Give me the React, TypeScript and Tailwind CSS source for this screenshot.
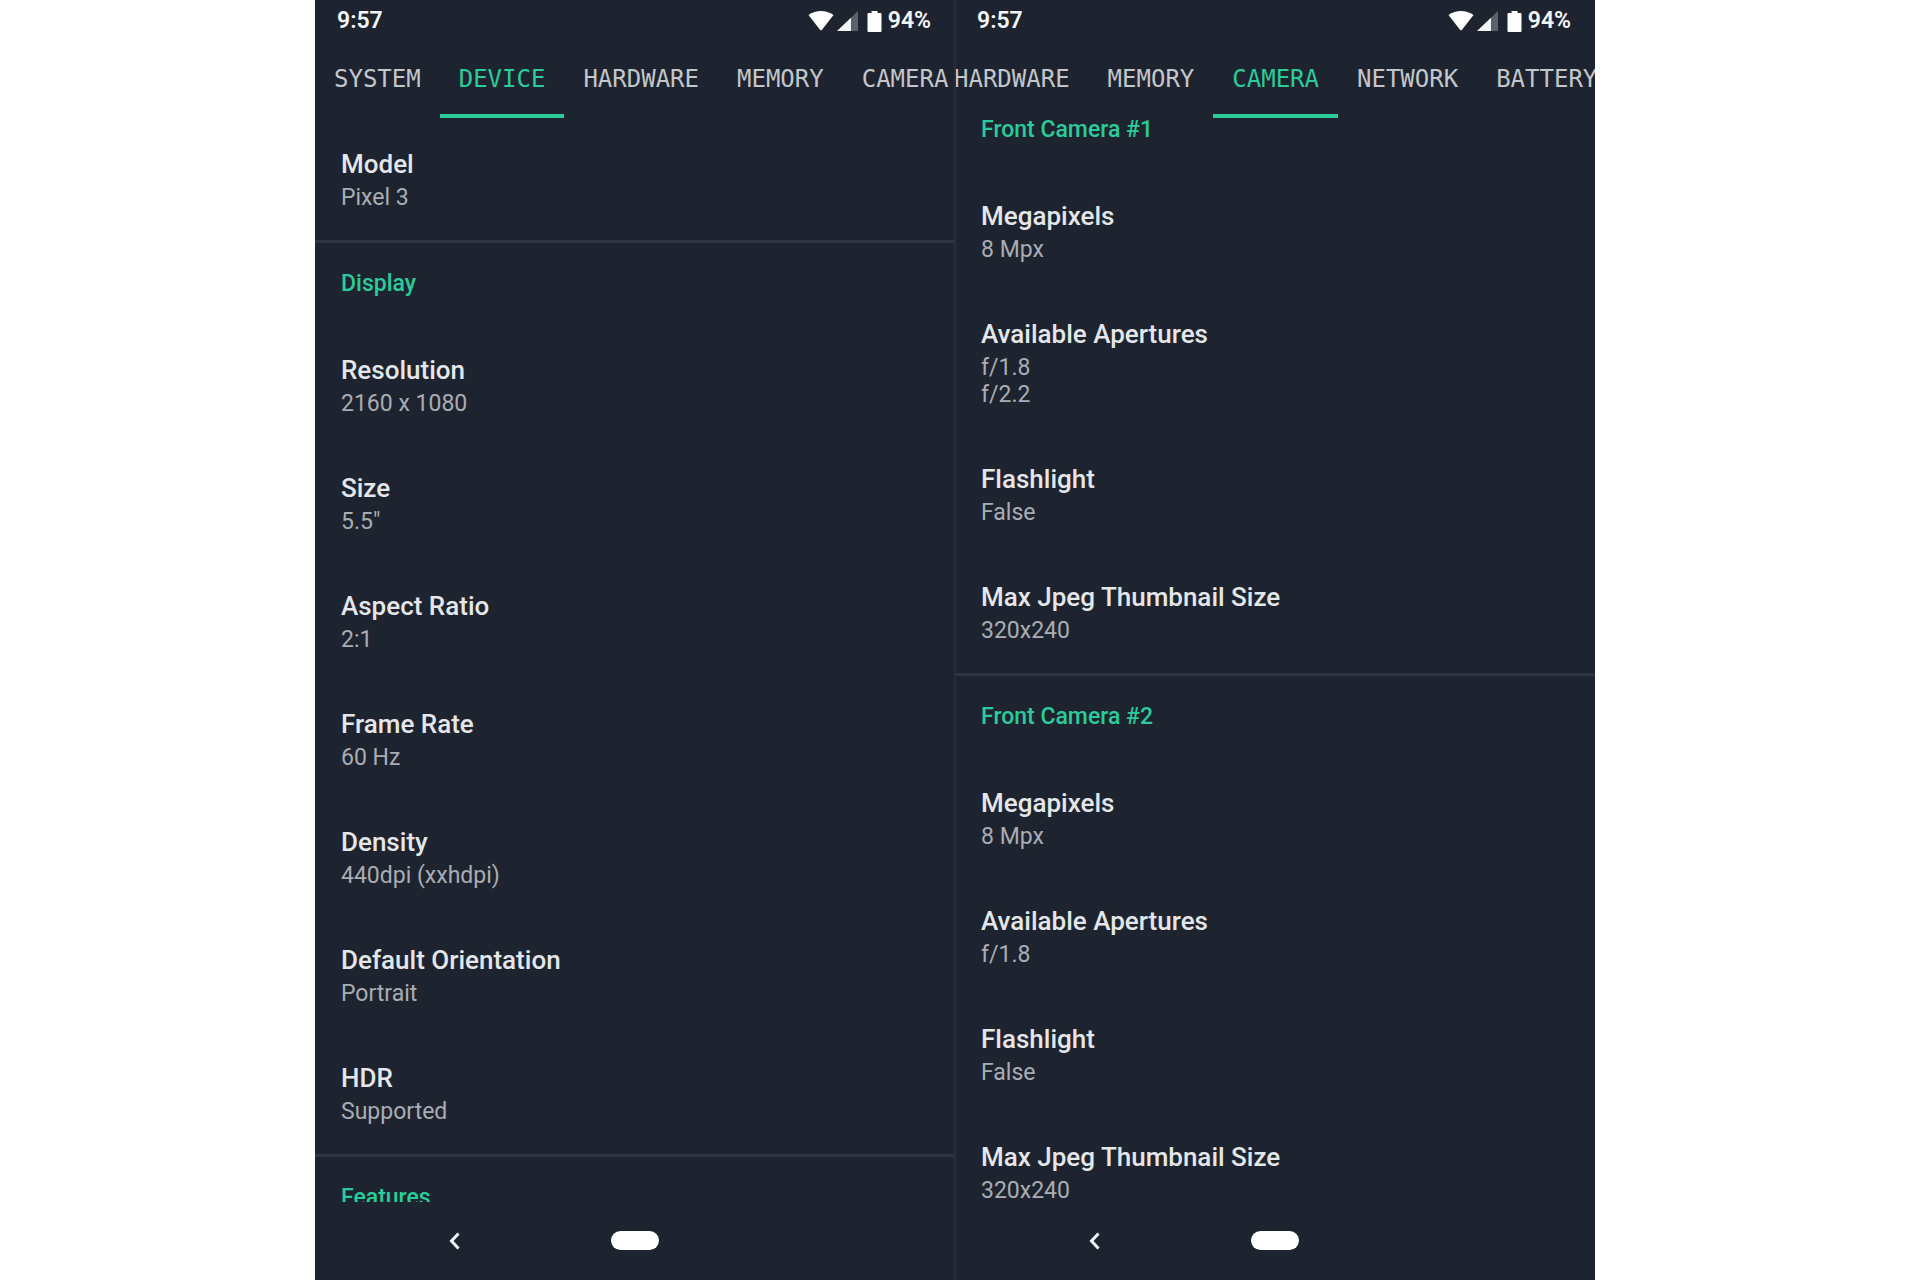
import React from 'react';
import clsx from 'clsx';

interface InfoItem {
  title: string;
  values: string[];
}

interface InfoSection {
  heading?: string;
  items: InfoItem[];
}

interface PhoneScreenProps {
  tabs: string[];
  activeTab: string;
  sections: InfoSection[];
  scrolled?: boolean;
}

const deviceSections: InfoSection[] = [
  { items: [{ title: 'Model', values: ['Pixel 3'] }] },
  {
    heading: 'Display',
    items: [
      { title: 'Resolution', values: ['2160 x 1080'] },
      { title: 'Size', values: ['5.5"'] },
      { title: 'Aspect Ratio', values: ['2:1'] },
      { title: 'Frame Rate', values: ['60 Hz'] },
      { title: 'Density', values: ['440dpi (xxhdpi)'] },
      { title: 'Default Orientation', values: ['Portrait'] },
      { title: 'HDR', values: ['Supported'] },
    ],
  },
  { heading: 'Features', items: [] },
];

const cameraSections: InfoSection[] = [
  {
    heading: 'Front Camera #1',
    items: [
      { title: 'Megapixels', values: ['8 Mpx'] },
      { title: 'Available Apertures', values: ['f/1.8', 'f/2.2'] },
      { title: 'Flashlight', values: ['False'] },
      { title: 'Max Jpeg Thumbnail Size', values: ['320x240'] },
    ],
  },
  {
    heading: 'Front Camera #2',
    items: [
      { title: 'Megapixels', values: ['8 Mpx'] },
      { title: 'Available Apertures', values: ['f/1.8'] },
      { title: 'Flashlight', values: ['False'] },
      { title: 'Max Jpeg Thumbnail Size', values: ['320x240'] },
    ],
  },
];

const StatusBar = () => (
  <div className="flex h-[43px] shrink-0 items-center justify-between pl-[22px] pr-6 text-[23px] font-semibold text-[#f4f5f6]">
    <span>9:57</span>
    <div className="flex items-center">
      <svg className="mr-[3px] h-[21px] w-[26px]" viewBox="0 0 26 21" fill="#fff" aria-hidden="true">
        <path d="M0.5 4C8 -1.3 18 -1.3 25.5 4L14 18.7Q13 19.9 12 18.7Z" />
      </svg>
      <svg className="mr-[9px] h-[21px] w-[21px]" viewBox="0 0 21 21" aria-hidden="true">
        <path d="M0 20L21 0V20Z" fill="#5b626c" />
        <path d="M0 20L14 6.7V20Z" fill="#f4f5f6" />
      </svg>
      <svg className="mr-[6px] h-[22px] w-[15px]" viewBox="0 0 15 22" fill="#fff" aria-hidden="true">
        <path d="M4.5 0H10.5V2H13.5Q14.5 2 14.5 3V20Q14.5 21 13.5 21H1.5Q0.5 21 0.5 20V3Q0.5 2 1.5 2H4.5Z" />
      </svg>
      <span>94%</span>
    </div>
  </div>
);

const InfoRow = ({ title, values }: InfoItem) => (
  <div className="py-[26px]">
    <dt className="text-[26px] font-medium leading-[39px] text-[#e4e6e9]">{title}</dt>
    {values.map((value) => (
      <dd key={value} className="text-[23px] leading-[27px] text-[#a9adb3]">
        {value}
      </dd>
    ))}
  </div>
);

const PhoneScreen = ({ tabs, activeTab, sections, scrolled }: PhoneScreenProps) => (
  <section className="flex min-w-0 flex-1 flex-col overflow-hidden bg-[#1e242f]">
    <StatusBar />
    <nav
      className={clsx(
        "flex h-[75px] shrink-0 font-['DejaVu_Sans_Mono',monospace] text-[24px]",
        scrolled && '-ml-5'
      )}
    >
      {tabs.map((tab) => (
        <button
          key={tab}
          type="button"
          className={clsx(
            'shrink-0 border-b-4 px-[19px]',
            tab === activeTab ? 'border-[#2bcb9a] text-[#2bcb9a]' : 'border-transparent text-[#c3c6ca]'
          )}
        >
          {tab}
        </button>
      ))}
    </nav>
    <main className="min-h-0 flex-1 overflow-hidden pt-px">
      <div className={clsx(scrolled && '-mt-[30px]')}>
        {sections.map((section, index) => (
          <div
            key={index}
            className={clsx('px-[26px] pb-[3px]', index < sections.length - 1 && 'border-b-[3px] border-[#2e3440]')}
          >
            {section.heading && (
              <h2 className="text-[23px] font-medium leading-[82px] text-[#2bcb9a]">{section.heading}</h2>
            )}
            <dl>
              {section.items.map((item) => (
                <InfoRow key={item.title} {...item} />
              ))}
            </dl>
          </div>
        ))}
      </div>
    </main>
    <footer className="grid h-[78px] shrink-0 grid-cols-[1fr_auto_1fr] items-center pb-px">
      <button type="button" aria-label="Back" className="mr-[151px] justify-self-end">
        <svg className="h-[18px] w-[11px]" viewBox="0 0 11 18" fill="none" stroke="#f4f5f6" strokeWidth="3">
          <path d="M9.5 1.5L2.5 9L9.5 16.5" />
        </svg>
      </button>
      <button type="button" aria-label="Home" className="h-[19px] w-12 rounded-full bg-white" />
    </footer>
  </section>
);

const App = () => {
  return (
    <div className="flex h-screen bg-white pl-[315px] pr-[325px] font-[Roboto,sans-serif]">
      <PhoneScreen
        tabs={['SYSTEM', 'DEVICE', 'HARDWARE', 'MEMORY', 'CAMERA']}
        activeTab="DEVICE"
        sections={deviceSections}
      />
      <div className="z-10 -mx-px w-[2px] bg-[#272e3a]" />
      <PhoneScreen
        tabs={['HARDWARE', 'MEMORY', 'CAMERA', 'NETWORK', 'BATTERY']}
        activeTab="CAMERA"
        sections={cameraSections}
        scrolled
      />
    </div>
  );
};

export default App;
